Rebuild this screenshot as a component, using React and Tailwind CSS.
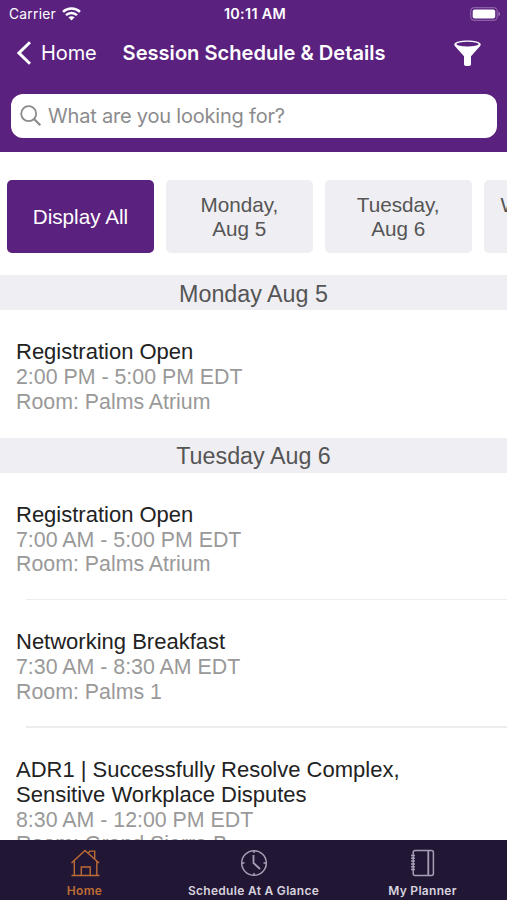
import React, { useState } from 'react';

const days = [
  { id: 'all', lines: ['Display All'] },
  { id: 'mon', lines: ['Monday,', 'Aug 5'] },
  { id: 'tue', lines: ['Tuesday,', 'Aug 6'] },
  { id: 'wed', lines: ['Wednesday,', 'Aug 7'] },
];

const schedule = [
  {
    day: 'Monday Aug 5',
    sessions: [
      { title: 'Registration Open', time: '2:00 PM - 5:00 PM EDT', room: 'Palms Atrium' },
    ],
  },
  {
    day: 'Tuesday Aug 6',
    sessions: [
      { title: 'Registration Open', time: '7:00 AM - 5:00 PM EDT', room: 'Palms Atrium' },
      { title: 'Networking Breakfast', time: '7:30 AM - 8:30 AM EDT', room: 'Palms 1' },
      {
        title: 'ADR1 | Successfully Resolve Complex, Sensitive Workplace Disputes',
        time: '8:30 AM - 12:00 PM EDT',
        room: 'Grand Sierra B',
      },
    ],
  },
];

function HomeIcon() {
  return (
    <svg width="30" height="30" viewBox="0 0 30 30" fill="none" stroke="currentColor" strokeWidth="1.4">
      <path d="M1.5 15 15 2.5 29 15M4.3 12.8v14.7M26.8 13.2v14.3M1.5 27.5h28M11.3 27.2V19h8.9v8.2M18.3 5.4l1.4-2.3h5v8" />
    </svg>
  );
}

function ClockIcon() {
  return (
    <svg width="30" height="30" viewBox="0 0 30 30" fill="none" stroke="#a79eb5" strokeWidth="1.5">
      <circle cx="15" cy="15" r="12.3" />
      <path d="M14.5 7v8l6.5 6" strokeWidth="1.8" />
      <path d="M15 2.5V5M15 25v2.5M2.5 15H5.5M24.5 15h3" />
    </svg>
  );
}

function PlannerIcon() {
  return (
    <svg width="30" height="30" viewBox="0 0 30 30" fill="none" stroke="#a79eb5" strokeWidth="1.5">
      <rect x="5.2" y="2.5" width="20.2" height="25" rx="2" />
      <path d="M20.3 2.5v25" strokeWidth="1.8" />
      <path d="M3 7.5h4M3 10.3h4M3 13.1h4M3 15.9h4M3 18.7h4M3 21.5h4" />
    </svg>
  );
}

const tabs = [
  { id: 'home', label: 'Home', icon: HomeIcon },
  { id: 'glance', label: 'Schedule At A Glance', icon: ClockIcon },
  { id: 'planner', label: 'My Planner', icon: PlannerIcon },
];

function StatusBar() {
  return (
    <div className="grid h-7 grid-cols-3 items-center pl-[9px] pr-1.5 text-[13.8px]">
      <div className="flex items-center gap-[6px]">
        <span className="tracking-[0.25px]">Carrier</span>
        <svg width="19" height="14" viewBox="0 0 19 14" fill="none" stroke="currentColor" strokeWidth="2.5">
          <path d="M1 4.8C5.8.4 13.2.4 18 4.8M4 8.1c3.1-2.9 7.9-2.9 11 0" />
          <path d="M9.5 13.5 6.4 10.3c1.7-1.5 4.5-1.5 6.2 0Z" fill="currentColor" stroke="none" />
        </svg>
      </div>
      <span className="text-center text-[14.4px] font-semibold tracking-[0.3px]">10:11 AM</span>
      <svg className="justify-self-end" width="31" height="14" viewBox="0 0 31 14">
        <rect x="0.7" y="0.7" width="26.5" height="12.6" rx="3.6" fill="none" stroke="#8b5fa8" strokeWidth="1.2" />
        <rect x="2.7" y="2.5" width="22.5" height="9" rx="2" fill="white" />
        <path d="M28.5 4.8c1.9.7 1.9 3.7 0 4.4Z" fill="#a584bd" />
      </svg>
    </div>
  );
}

function Header() {
  return (
    <header className="h-[152px] shrink-0 bg-[#5b217f] text-white">
      <StatusBar />
      <div className="flex h-[50px] items-center pl-[17px] pr-[26px]">
        <button className="flex w-[105.6px] items-center gap-[10px] text-[20px] tracking-[-0.1px]">
          <svg width="14" height="24" viewBox="0 0 14 24" fill="none" stroke="currentColor" strokeWidth="3">
            <path d="M13 1.2 2 12l11 10.8" />
          </svg>
          Home
        </button>
        <h1 className="text-[20.1px] font-semibold whitespace-nowrap">Session Schedule &amp; Details</h1>
        <button className="ml-auto">
          <svg width="27" height="26" viewBox="0 0 27 26">
            <path d="M.3 4.5C.3-.7 26.7-.7 26.7 4.5c0 1.5-1.5 2.7-3 4.2L17 16.2v8.2c0 2-7 2-7 0v-8.2L3.3 8.7C1.8 7.2.3 6 .3 4.5Z" fill="currentColor" />
            <ellipse cx="13.5" cy="4.1" rx="11.2" ry="2.4" fill="#5b217f" />
          </svg>
        </button>
      </div>
      <div className="mr-[10px] ml-[11px] mt-4 flex h-[43.5px] items-center gap-[6px] rounded-xl bg-white pl-[9px] text-[#8b8b8d]">
        <svg width="22" height="22" viewBox="0 0 22 22" fill="none" stroke="currentColor" strokeWidth="1.8">
          <circle cx="8.7" cy="8.7" r="7.5" />
          <path d="m14 14 6.3 6.3" strokeWidth="2.2" />
        </svg>
        <span className="text-[20px] tracking-[-0.2px]">What are you looking for?</span>
      </div>
    </header>
  );
}

function Session({ session, divider }) {
  return (
    <div>
      <div className={`px-4 pt-[29px] ${divider ? 'pb-[22px]' : 'pb-[23.6px]'}`}>
        <h3 className="mb-px w-[420px] text-[22px] leading-[25px] text-[#222222]">{session.title}</h3>
        <p className="text-[21.35px] leading-[24.5px] text-[#999999]">{session.time}</p>
        <p className="text-[21.35px] leading-[24.5px] text-[#999999]">Room: {session.room}</p>
      </div>
      {divider && <div className="ml-[26px] h-[1.5px] bg-[#ededee]" />}
    </div>
  );
}

export default function App() {
  const [activeDay, setActiveDay] = useState('all');
  const [activeTab, setActiveTab] = useState('home');

  return (
    <div className="flex h-[900px] w-[507px] flex-col overflow-hidden bg-white font-['Inter',sans-serif]">
      <Header />

      <main className="min-h-0 flex-1 overflow-hidden font-['Liberation_Sans',sans-serif]">
        {/* Day filter */}
        <div className="flex gap-3 overflow-hidden pt-7 pb-[22px] pl-[7px]">
          {days.map(day => (
            <button
              key={day.id}
              onClick={() => setActiveDay(day.id)}
              className={`flex h-[73px] w-[146.9px] shrink-0 flex-col items-center justify-center rounded-[5px] text-[20.7px] leading-6 ${
                activeDay === day.id ? 'bg-[#5b217f] text-white' : 'bg-[#efeef3] text-[#555555]'
              }`}
            >
              {day.lines.map(line => (
                <span key={line}>{line}</span>
              ))}
            </button>
          ))}
        </div>

        {schedule.map(group => (
          <section key={group.day}>
            <h2 className="flex h-[35px] items-center justify-center bg-[#efeef3] pt-[3px] text-[23.3px] text-[#555555]">
              {group.day}
            </h2>
            {group.sessions.map((session, idx) => (
              <Session key={session.title} session={session} divider={idx < group.sessions.length - 1} />
            ))}
          </section>
        ))}
      </main>

      <nav className="grid h-[60px] shrink-0 grid-cols-3 bg-[#211735]">
        {tabs.map(({ id, label, icon: Icon }) => (
          <button
            key={id}
            onClick={() => setActiveTab(id)}
            className={`flex flex-col items-center pt-2 text-[12px] font-semibold ${
              activeTab === id ? 'text-[#bd6b35]' : 'text-[#d8d3df]'
            }`}
          >
            <Icon />
            <span className="mt-1 leading-[17px] tracking-[0.3px]">{label}</span>
          </button>
        ))}
      </nav>
    </div>
  );
}
